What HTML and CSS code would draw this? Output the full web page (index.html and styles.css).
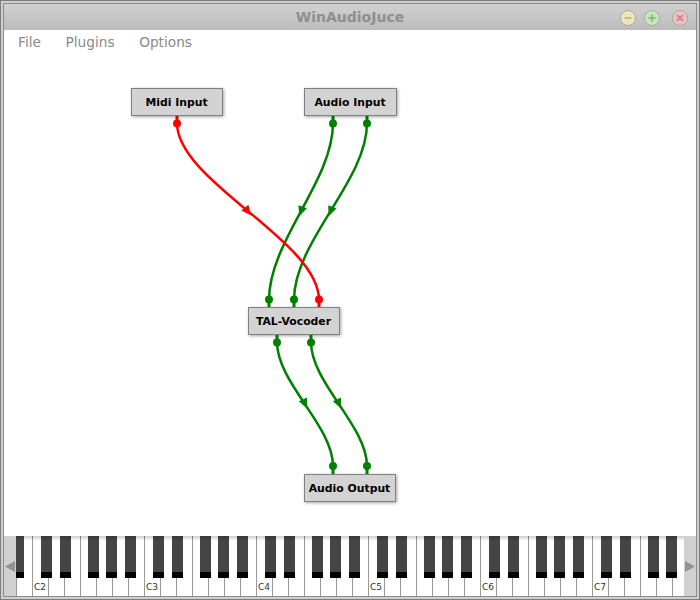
FILE: index.html
```html
<!DOCTYPE html>
<html lang="en">
<head>
<meta charset="utf-8">
<title>WinAudioJuce</title>
<link rel="stylesheet" href="styles.css">
</head>
<body>
<div class="window">
  <header class="titlebar">
    <div class="title">WinAudioJuce</div>
    <div class="controls">
      <span class="ctl ctl-min"><svg viewBox="0 0 10 10" width="10" height="10"><path d="M1.5 5h7" class="glyph"/></svg></span>
      <span class="ctl ctl-max"><svg viewBox="0 0 10 10" width="10" height="10"><path d="M1.5 5h7M5 1.5v7" class="glyph"/></svg></span>
      <span class="ctl ctl-close"><svg viewBox="0 0 10 10" width="10" height="10"><path d="M2 2l6 6M8 2l-6 6" class="glyph"/></svg></span>
    </div>
  </header>
  <nav class="menubar">
    <span class="menu-item">File</span>
    <span class="menu-item">Plugins</span>
    <span class="menu-item">Options</span>
  </nav>
  <main class="graph">
    <svg class="wires" width="700" height="600" viewBox="0 0 700 600">
      <defs>
        <g id="arrow"><path d="M-4.5 5L4.5 5L0 -5Z"/></g>
      </defs>
      <g class="green">
        <path class="wire" d="M333 123C333 181.4 269 240.8 269 300"/>
        <path class="wire" d="M367 123C367 181.4 294 240.8 294 300"/>
        <path class="wire" d="M277 342C277 383 333 425.8 333 466"/>
        <path class="wire" d="M311 342C311 383 367 425.8 367 466"/>
        <use href="#arrow" transform="translate(301 211.5) rotate(199)"/>
        <use href="#arrow" transform="translate(330.5 211.5) rotate(202)"/>
        <use href="#arrow" transform="translate(305 404) rotate(156)"/>
        <use href="#arrow" transform="translate(339 404) rotate(156)"/>
        <path d="M333 116v7M367 116v7M269 300v7M294 300v7M277 335v7M311 335v7M333 466v8M367 466v8" class="stem"/>
        <circle cx="333" cy="123.5" r="4"/><circle cx="367" cy="123.5" r="4"/>
        <circle cx="269" cy="299.5" r="4"/><circle cx="294" cy="299.5" r="4"/>
        <circle cx="277" cy="342.5" r="4"/><circle cx="311" cy="342.5" r="4"/>
        <circle cx="333" cy="466" r="4"/><circle cx="367" cy="466" r="4"/>
      </g>
      <g class="red">
        <path class="wire" d="M177 123C177 181.4 319 240.8 319 300"/>
        <use href="#arrow" transform="translate(248 211.5) rotate(141)"/>
        <path d="M177 116v7M319 300v7" class="stem"/>
        <circle cx="177" cy="123.5" r="4"/><circle cx="319" cy="299.5" r="4"/>
      </g>
    </svg>
    <div class="node node-midi">Midi Input</div>
    <div class="node node-audio-in">Audio Input</div>
    <div class="node node-vocoder">TAL-Vocoder</div>
    <div class="node node-audio-out">Audio Output</div>
  </main>
  <section class="keyboard-row">
    <div class="scroll"><svg width="10" height="11" viewBox="0 0 10 11"><path d="M0 5.5L10 0V11Z" class="scroll-arrow"/></svg></div>
    <div class="keyboard">
      <div class="octaves">
        <div class="octave"><i class="w"></i><i class="w"></i><i class="w"></i><i class="w"></i><i class="w"></i><i class="w"></i><i class="w"></i><b class="k cs"></b><b class="k ds"></b><b class="k fs"></b><b class="k gs"></b><b class="k as"></b></div>
        <div class="octave"><i class="w">C2</i><i class="w"></i><i class="w"></i><i class="w"></i><i class="w"></i><i class="w"></i><i class="w"></i><b class="k cs"></b><b class="k ds"></b><b class="k fs"></b><b class="k gs"></b><b class="k as"></b></div>
        <div class="octave"><i class="w">C3</i><i class="w"></i><i class="w"></i><i class="w"></i><i class="w"></i><i class="w"></i><i class="w"></i><b class="k cs"></b><b class="k ds"></b><b class="k fs"></b><b class="k gs"></b><b class="k as"></b></div>
        <div class="octave"><i class="w">C4</i><i class="w"></i><i class="w"></i><i class="w"></i><i class="w"></i><i class="w"></i><i class="w"></i><b class="k cs"></b><b class="k ds"></b><b class="k fs"></b><b class="k gs"></b><b class="k as"></b></div>
        <div class="octave"><i class="w">C5</i><i class="w"></i><i class="w"></i><i class="w"></i><i class="w"></i><i class="w"></i><i class="w"></i><b class="k cs"></b><b class="k ds"></b><b class="k fs"></b><b class="k gs"></b><b class="k as"></b></div>
        <div class="octave"><i class="w">C6</i><i class="w"></i><i class="w"></i><i class="w"></i><i class="w"></i><i class="w"></i><i class="w"></i><b class="k cs"></b><b class="k ds"></b><b class="k fs"></b><b class="k gs"></b><b class="k as"></b></div>
        <div class="octave"><i class="w">C7</i><i class="w"></i><i class="w"></i><i class="w"></i><i class="w"></i><i class="w"></i><i class="w"></i><b class="k cs"></b><b class="k ds"></b><b class="k fs"></b><b class="k gs"></b><b class="k as"></b></div>
      </div>
      <div class="key-shade"></div>
    </div>
    <div class="scroll"><svg width="10" height="11" viewBox="0 0 10 11"><path d="M10 5.5L0 0V11Z" class="scroll-arrow"/></svg></div>
  </section>
</div>
</body>
</html>
```
FILE: styles.css
```css
* { box-sizing: border-box; }
html, body { margin: 0; height: 100%; }
body { overflow: hidden; background: #fff; font-family: "DejaVu Sans", sans-serif; }

.window {
  width: 700px;
  height: 600px;
  display: flex;
  flex-direction: column;
  background: #d0d0d0;
  border: 1px solid #7c7c7c;
  padding: 3px;
  box-shadow: inset 0 0 0 2px #cfcfcf, inset 0 0 0 3px #8c8c8c;
}

.titlebar {
  height: 26px;
  padding-right: 8px;
  flex: none;
  display: flex;
  align-items: center;
  justify-content: flex-end;
  position: relative;
  background: linear-gradient(#d1d1d1, #bbb);
}
.title {
  position: absolute;
  left: 0;
  right: 0;
  text-align: center;
  font-size: 14px;
  font-weight: bold;
  color: #8f8f8f;
  top: 5px;
}
.controls { display: flex; gap: 8px; margin-top: 1px; position: relative; filter: blur(.6px); }
.ctl {
  width: 16px;
  height: 16px;
  border-radius: 50%;
  display: flex;
  align-items: center;
  justify-content: center;
  border: 1px solid #aaa9a2;
}
.ctl svg { display: block; }
.glyph { fill: none; stroke-width: 2; }
.ctl-min { background: #ece4bd; }
.ctl-min .glyph { stroke: #c2bb98; }
.ctl-max { background: #c3e8b8; }
.ctl-max .glyph { stroke: #8fb98c; }
.ctl-close { background: #efc0c0; margin-left: 4px; }
.ctl-close .glyph { stroke: #c78f8f; }

.menubar {
  flex: none;
  height: 24px;
  background: #fff;
  display: flex;
  gap: 24.6px;
  padding-left: 14px;
  align-items: center;
}
.menu-item { font-size: 13.7px; color: #8a8a8a; }

.graph { flex: 1; background: #fff; position: relative; }
.wires { position: absolute; left: -4px; top: -54px; pointer-events: none; }
.wire { fill: none; stroke-width: 2.5; }
.stem { fill: none; stroke-width: 3; }
.green { fill: #008000; }
.green .wire, .green .stem { stroke: #008000; }
.red { fill: #f00; }
.red .wire, .red .stem { stroke: #f00; }

.node {
  position: absolute;
  height: 28px;
  width: 92px;
  display: flex;
  align-items: center;
  justify-content: center;
  background: #d3d3d3;
  border: 1px solid #808080;
  box-shadow: 1px 1px 3px rgba(0,0,0,.35);
  font-size: 10.85px;
  font-weight: bold;
  color: #000;
  padding-right: 1px;
}
.node-midi { left: 127px; top: 34px; }
.node-audio-in { left: 300px; top: 34px; width: 93px; }
.node-vocoder { left: 244px; top: 253px; }
.node-audio-out { left: 300px; top: 420px; }

.keyboard-row { flex: none; height: 60px; display: flex; background: #d0d0d0; }
.scroll {
  width: 12px;
  flex: none;
  display: flex;
  align-items: center;
  justify-content: center;
}
.scroll-arrow { fill: #929292; }
.keyboard {
  flex: 1;
  position: relative;
  overflow: hidden;
  background: #fff;
}
.octaves { display: flex; margin-left: -96px; height: 100%; }
.octave { flex: none; width: 112px; height: 100%; display: flex; position: relative; }
.w {
  flex: none;
  width: 16px;
  height: 100%;
  border-left: 1px solid #999;
  background: #fff;
  font: normal 9px "DejaVu Sans", sans-serif;
  color: #333;
  padding: 46px 0 0 1px;
  white-space: nowrap;
}
.k {
  position: absolute;
  top: 0;
  width: 11px;
  height: 42px;
  background: #454545;
  border-bottom: 6px solid #000;
}
.cs { left: 9px; }
.ds { left: 28px; }
.fs { left: 56px; }
.gs { left: 74px; }
.as { left: 93px; }
.key-shade {
  position: absolute;
  left: 0;
  right: 0;
  top: 0;
  height: 5px;
  background: linear-gradient(rgba(0,0,0,.2), rgba(0,0,0,0));
}
```
